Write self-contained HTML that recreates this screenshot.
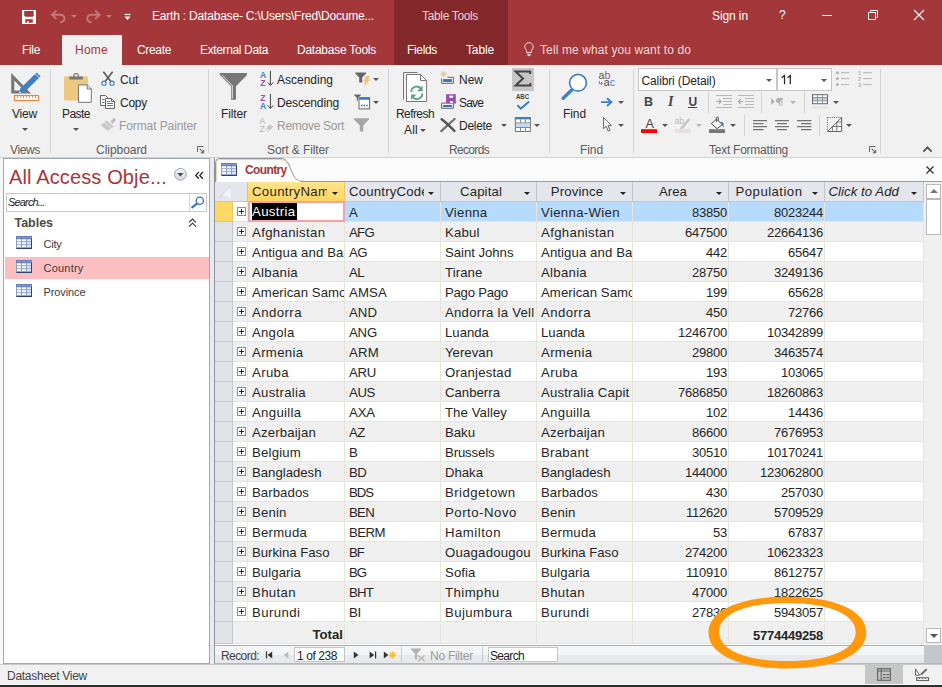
<!DOCTYPE html>
<html><head><meta charset="utf-8"><title>Access</title>
<style>
*{box-sizing:border-box;margin:0;padding:0}
html,body{width:942px;height:687px;overflow:hidden;background:#f1f1f1}
body{font-family:"Liberation Sans",sans-serif;font-size:12px;color:#262626;position:relative}
.abs,#app *{position:absolute}
#app{position:absolute;left:0;top:0;width:942px;height:687px;overflow:hidden}
#app svg{overflow:visible}
/* title */
#title{left:0;top:0;width:942px;height:65px;background:#a4373a}
#tt{left:394px;top:0;width:114px;height:65px;background:#83292c}
.w{color:#fff;white-space:nowrap}
.t12{font-size:12px;line-height:14px;white-space:nowrap}
#hometab{left:62px;top:35px;width:60px;height:30px;background:#f1f1f1}
/* ribbon */
#ribbon{left:0;top:65px;width:942px;height:92px;background:#f1f1f1}
#ribline{left:0;top:157px;width:942px;height:1px;background:#d2d2d2}
.sep{width:1px;background:#d4d4d4;top:70px;height:83px}
.lbl{font-size:12px;color:#262626;white-space:nowrap;line-height:14px}
.dis{color:#9a9a9a}
.grp{font-size:12px;color:#5c5c5c;white-space:nowrap;line-height:14px;top:142px}
.dd{width:0;height:0;border-left:3px solid transparent;border-right:3px solid transparent;border-top:3px solid #555}
.dd.g{border-top-color:#b4b4b4}
/* nav */
#navwrap{left:0;top:158px;width:214px;height:506px;background:linear-gradient(90deg,#f7f7f7 0,#f7f7f7 209px,#e9ebee 209px)}
#nav{left:3px;top:158px;width:207px;height:506px;background:#fff;border:1px solid #a1a8b2}
#navsel{left:5px;top:257px;width:204px;height:22px;background:#fbbfc1}
/* doc */
#doc{left:214px;top:158px;width:728px;height:506px;background:#f0f0f0}
#grid{left:215px;top:182px;width:709px;height:463px;background:#fff;overflow:hidden}
.r{left:0;width:708px;height:20px;font-size:13.2px;line-height:21px;white-space:nowrap}
#grid .r{left:0}
.r .rs{left:0;top:0;width:18px;height:20px;background:#e1e3e8;border-right:1px solid #c6c8cf;border-bottom:1px solid #c6c8cf}
.r .ex{left:18px;top:0;width:15px;height:20px;border-bottom:1px solid #e6e2d3;border-right:1px solid #ece9de}
.r .ex b{left:4px;top:5px;width:9px;height:9px;border:1px solid #8d8d8d;background:#fff}
.r .ex b:before{content:"";position:absolute;left:1px;top:3px;width:5px;height:1px;background:#222}
.r .ex b:after{content:"";position:absolute;left:3px;top:1px;width:1px;height:5px;background:#222}
.c{top:0;height:20px;overflow:hidden;padding-left:4px;border-right:1px solid #e8e5d7;border-bottom:1px solid #e8e5d7;color:#262626;letter-spacing:0}
.c1{left:33px;width:97px}.c2{left:130px;width:96px}.c3{left:226px;width:96px}.c4{left:322px;width:96px}.c5{left:418px;width:96px}.c6{left:514px;width:96px}.c7{left:610px;width:99px}
.n{text-align:right;padding-right:1px;padding-left:0;font-size:13px;letter-spacing:-.22px;line-height:22px}
.alt .c,.alt .ex,.tot .c{background:#f0f0f0}
.sel .c,.sel .ex{background:#b7dbff}
.sel .ex{background:#fff}
.sel .rs{background:#ffd966;border-color:#e8c75a}
.c.edit{background:#fff;border:2px solid #f3a3a8;line-height:17px;padding-left:2px;top:-1px;height:21px;z-index:3}
.c.edit em{position:static;font-style:normal;background:#000;color:#fff;display:inline-block;height:17px;line-height:18px;padding:0 1px 0 0}
/* header */
.h{top:0;height:20px;background:#e4e6eb;border-right:1px solid #c3c5cc;border-bottom:1px solid #c3c5cc;font-size:13.2px;line-height:19px;white-space:nowrap;overflow:hidden;color:#262626}
.h .dd{border-top-color:#222;top:9.5px;border-left-width:3.5px;border-right-width:3.5px;border-top-width:3.5px}
/* status */
#status{left:0;top:664px;width:942px;height:20px;background:#f1f1f1;border-top:1px solid #c9c9c9}
#blackbar{left:0;top:684px;width:942px;height:3px;background:#2e2e2e;border-top:1px solid #fafafa}
</style></head><body><div id="app">
<div id="title"></div><div id="tt"></div><div id="hometab"></div>
<span class="" style="left:152px;top:8px;font-size:12px;line-height:16px;white-space:nowrap;letter-spacing:-0.197px;color:#fff;">Earth : Database- C:\Users\Fred\Docume...</span>
<span class="" style="left:422px;top:8px;font-size:12px;line-height:16px;white-space:nowrap;letter-spacing:-0.347px;color:#e9cfd0;">Table Tools</span>
<span class="" style="left:712px;top:8px;font-size:12px;line-height:16px;white-space:nowrap;letter-spacing:-0.099px;color:#fff;">Sign in</span>
<span class="" style="left:779px;top:7px;font-size:12px;line-height:16px;white-space:nowrap;color:#fff;">?</span>
<span class="" style="left:22px;top:42px;font-size:12px;line-height:16px;white-space:nowrap;letter-spacing:-0.334px;color:#fff;">File</span>
<span class="" style="left:75px;top:42px;font-size:12px;line-height:16px;white-space:nowrap;letter-spacing:0.248px;color:#a4373a;">Home</span>
<span class="" style="left:137px;top:42px;font-size:12px;line-height:16px;white-space:nowrap;letter-spacing:-0.336px;color:#fff;">Create</span>
<span class="" style="left:200px;top:42px;font-size:12px;line-height:16px;white-space:nowrap;letter-spacing:-0.362px;color:#fff;">External Data</span>
<span class="" style="left:297px;top:42px;font-size:12px;line-height:16px;white-space:nowrap;letter-spacing:-0.250px;color:#fff;">Database Tools</span>
<span class="" style="left:407px;top:42px;font-size:12px;line-height:16px;white-space:nowrap;letter-spacing:-0.335px;color:#fff;">Fields</span>
<span class="" style="left:466px;top:42px;font-size:12px;line-height:16px;white-space:nowrap;letter-spacing:-0.137px;color:#fff;">Table</span>
<span class="" style="left:540px;top:42px;font-size:12px;line-height:16px;white-space:nowrap;letter-spacing:0.108px;color:#f0d9da;">Tell me what you want to do</span>
<div id="ribbon"></div><div id="ribline"></div>
<i class="sep" style="left:50px;top:69px;height:84px"></i>
<i class="sep" style="left:208px;top:69px;height:84px"></i>
<i class="sep" style="left:388px;top:69px;height:84px"></i>
<i class="sep" style="left:549px;top:69px;height:84px"></i>
<i class="sep" style="left:633px;top:69px;height:84px"></i>
<i class="sep" style="left:880px;top:69px;height:84px"></i>
<span class="lbl" style="left:12px;top:106px;font-size:12px;line-height:16px;white-space:nowrap;letter-spacing:-0.198px;">View</span>
<i class="dd " style="left:22px;top:128px"></i>
<span class="grp" style="left:10px;top:142px;font-size:12px;line-height:16px;white-space:nowrap;letter-spacing:-0.358px;">Views</span>
<span class="lbl" style="left:62px;top:106px;font-size:12px;line-height:16px;white-space:nowrap;letter-spacing:-0.537px;">Paste</span>
<i class="dd " style="left:73px;top:128px"></i>
<span class="lbl" style="left:120px;top:72px;font-size:12px;line-height:16px;white-space:nowrap;letter-spacing:-0.224px;">Cut</span>
<span class="lbl" style="left:120px;top:95px;font-size:12px;line-height:16px;white-space:nowrap;letter-spacing:-0.253px;">Copy</span>
<span class="lbl dis" style="left:119px;top:118px;font-size:12px;line-height:16px;white-space:nowrap;letter-spacing:-0.097px;">Format Painter</span>
<span class="grp" style="left:96px;top:142px;font-size:12px;line-height:16px;white-space:nowrap;letter-spacing:-0.040px;">Clipboard</span>
<span class="lbl" style="left:221px;top:106px;font-size:12px;line-height:16px;white-space:nowrap;letter-spacing:-0.111px;">Filter</span>
<span class="lbl" style="left:277px;top:72px;font-size:12px;line-height:16px;white-space:nowrap;letter-spacing:-0.004px;">Ascending</span>
<span class="lbl" style="left:277px;top:95px;font-size:12px;line-height:16px;white-space:nowrap;letter-spacing:-0.137px;">Descending</span>
<span class="lbl dis" style="left:277px;top:118px;font-size:12px;line-height:16px;white-space:nowrap;letter-spacing:-0.275px;">Remove Sort</span>
<span class="grp" style="left:267px;top:142px;font-size:12px;line-height:16px;white-space:nowrap;letter-spacing:-0.104px;">Sort &amp; Filter</span>
<i class="dd " style="left:373px;top:78px"></i>
<i class="dd " style="left:373px;top:101px"></i>
<span class="lbl" style="left:396px;top:106px;font-size:12px;line-height:16px;white-space:nowrap;letter-spacing:-0.574px;">Refresh</span>
<span class="lbl" style="left:404px;top:122px;font-size:12px;line-height:16px;white-space:nowrap;letter-spacing:0.221px;">All</span>
<i class="dd " style="left:420px;top:129px"></i>
<span class="lbl" style="left:459px;top:72px;font-size:12px;line-height:16px;white-space:nowrap;letter-spacing:-0.002px;">New</span>
<span class="lbl" style="left:459px;top:95px;font-size:12px;line-height:16px;white-space:nowrap;letter-spacing:-0.838px;">Save</span>
<span class="lbl" style="left:459px;top:118px;font-size:12px;line-height:16px;white-space:nowrap;letter-spacing:-0.281px;">Delete</span>
<i class="dd " style="left:501px;top:124px"></i>
<span class="grp" style="left:449px;top:142px;font-size:12px;line-height:16px;white-space:nowrap;letter-spacing:-0.669px;">Records</span>
<i class="dd " style="left:534px;top:124px"></i>
<span class="lbl" style="left:563px;top:106px;font-size:12px;line-height:16px;white-space:nowrap;letter-spacing:-0.086px;">Find</span>
<span class="grp" style="left:580px;top:142px;font-size:12px;line-height:16px;white-space:nowrap;letter-spacing:-0.086px;">Find</span>
<i class="dd " style="left:618px;top:101px"></i>
<i class="dd " style="left:618px;top:124px"></i>
<div style="left:638px;top:68px;width:139px;height:23px;background:#fff;border:1px solid #c6c6c6"></div>
<div style="left:777px;top:68px;width:55px;height:23px;background:#fff;border:1px solid #c6c6c6"></div>
<span class="lbl" style="left:641.5px;top:73px;font-size:12px;line-height:16px;white-space:nowrap;letter-spacing:-0.126px;">Calibri (Detail)</span>
<i class="dd " style="left:766px;top:79px"></i>
<svg style="left:780px;top:74px" width="13" height="12" viewBox="780 74 13 12"><path d="M781.6 77.8L784.5 75.6V84.2M787.4 77.8L790.3 75.6V84.2" fill="none" stroke="#262626" stroke-width="1.25"/></svg>
<i class="dd " style="left:821px;top:79px"></i>
<span class="lbl" style="left:644px;top:94px;font-size:12.5px;line-height:16.5px;white-space:nowrap;letter-spacing:-1.027px;color:#444;font-weight:bold;">B</span>
<span class="lbl" style="left:668px;top:94px;font-size:12px;line-height:16px;white-space:nowrap;color:#444;font-weight:bold;font-style:italic;font-family:'Liberation Serif',serif;font-size:14px;">I</span>
<span class="lbl" style="left:688.5px;top:94px;font-size:12px;line-height:16px;white-space:nowrap;letter-spacing:-0.166px;color:#444;font-weight:bold;">U</span>
<i style="left:688px;top:107px;width:9px;height:1px;background:#444"></i>
<i class="sep" style="left:708px;top:92px;height:21px"></i>
<i class="sep" style="left:761px;top:92px;height:21px"></i>
<i class="sep" style="left:804px;top:92px;height:21px"></i>
<i class="sep" style="left:744px;top:115px;height:21px"></i>
<i class="sep" style="left:819px;top:115px;height:21px"></i>
<i class="dd g" style="left:790px;top:101px"></i>
<i class="dd " style="left:833px;top:101px"></i>
<i class="dd " style="left:662px;top:124px"></i>
<i class="dd g" style="left:696px;top:124px"></i>
<i class="dd " style="left:730px;top:124px"></i>
<i class="dd " style="left:846px;top:124px"></i>
<span class="grp" style="left:709px;top:142px;font-size:12px;line-height:16px;white-space:nowrap;letter-spacing:-0.246px;">Text Formatting</span>
<!-- QAT -->
<svg style="left:22px;top:10px" width="14" height="14" viewBox="22 10 14 14"><rect x="22" y="10" width="14" height="14" rx="0.6" fill="#fff"/><path d="M24.2 11.1H33.7V15.4L32.7 16.7H25.2L24.2 15.4Z" fill="#a4373a"/><rect x="25.2" y="19.2" width="7.6" height="3.5" fill="#a4373a"/><rect x="27" y="21.1" width="1.7" height="1.6" fill="#fff"/></svg>
<svg style="left:50px;top:9px" width="17" height="15" viewBox="50 9 17 15"><path d="M56.4 10.6L52 14.8L56.4 19M52.4 14.8H59.6Q64.4 14.8 64.4 18.6Q64.4 22 60 22.2" fill="none" stroke="#c7767a" stroke-width="1.9"/></svg>
<i class="dd" style="left:71px;top:15px;border-top-color:#c7767a"></i>
<svg style="left:85px;top:9px" width="17" height="15" viewBox="85 9 17 15"><path d="M95.2 10.6L99.6 14.8L95.2 19M99.2 14.8H92Q87.2 14.8 87.2 18.6Q87.2 22 91.6 22.2" fill="none" stroke="#c7767a" stroke-width="1.9"/></svg>
<i class="dd" style="left:106px;top:15px;border-top-color:#c9787b"></i>
<svg style="left:124px;top:13px" width="8" height="8" viewBox="124 13 8 8"><path d="M124.6 14.5H130.4" stroke="#fff" stroke-width="1.2"/><path d="M124.4 16.6H130.6L127.5 20Z" fill="#fff"/></svg>
<!-- window buttons -->
<svg style="left:822px;top:10px" width="10" height="11" viewBox="0 0 10 11"><path d="M0 5.5H10" stroke="#fff" stroke-width="1"/></svg>
<svg style="left:868px;top:10px" width="10" height="10" viewBox="0 0 10 10"><path d="M0.5 2.5H7.5V9.5H0.5Z M2.5 2.5V0.5H9.5V7.5H7.5" fill="none" stroke="#fff" stroke-width="1"/></svg>
<svg style="left:914px;top:10px" width="10" height="10" viewBox="0 0 10 10"><path d="M0 0L10 10M10 0L0 10" stroke="#fff" stroke-width="1.1"/></svg>
<!-- bulb -->
<svg style="left:524px;top:42px" width="10" height="14" viewBox="0 0 10 14"><path d="M5 0.6A4.2 4.2 0 0 1 7.5 8.2V10.5H2.5V8.2A4.2 4.2 0 0 1 5 0.6Z" fill="none" stroke="#f0d9da" stroke-width="1"/><path d="M3 12.3H7M3.6 13.6H6.4" stroke="#f0d9da" stroke-width="1"/></svg>
<!-- View icon -->
<svg style="left:10px;top:70px" width="32" height="32" viewBox="10 70 32 32"><path d="M11.2 73L31.2 93.4H11.2Z M14.3 80.6V90.4H24Z" fill="#777" fill-rule="evenodd"/><path d="M19 93.6L20.3 88.6L36.6 72.4L40.6 76.3L24.2 92.4Z" fill="#3f7fc3"/><path d="M35.2 73.8L39.2 77.7" stroke="#f1f1f1" stroke-width="0.9"/><path d="M19.6 91.3L21.4 93L19 93.6Z" fill="#f1f1f1"/><rect x="14.5" y="95.5" width="24" height="5" fill="#fff" stroke="#e8873a" stroke-width="1.1"/><path d="M17.5 95.5V98M20.5 95.5V97.4M23.5 95.5V98M26.5 95.5V97.4M29.5 95.5V98M32.5 95.5V97.4M35.5 95.5V98" stroke="#e8873a" stroke-width="1"/></svg>
<!-- Paste icon -->
<svg style="left:62px;top:70px" width="32" height="34" viewBox="62 70 32 34"><rect x="64" y="76.2" width="24" height="24.4" rx="1.6" fill="#edc87e"/><path d="M69.4 79.6V76.4H73.4V74.6Q73.4 73 76.1 73Q78.8 73 78.8 74.6V76.4H82.8V79.6Z" fill="#777"/><rect x="74.6" y="74.4" width="3" height="2" fill="#f1f1f1"/><path d="M78.5 84.9H87.2L91.3 89V102.3H78.5Z" fill="#fff" stroke="#777" stroke-width="1"/><path d="M87.2 84.9V89H91.3" fill="none" stroke="#777" stroke-width="1"/></svg>
<!-- Cut -->
<svg style="left:100px;top:70px" width="17" height="17" viewBox="100 70 17 17"><path d="M103.4 71.8L111.2 82M112.6 71.8L104.8 82" stroke="#555" stroke-width="1.5" fill="none"/><circle cx="104" cy="83.2" r="2.1" fill="none" stroke="#3f7fc3" stroke-width="1.1"/><circle cx="112" cy="83.2" r="2.1" fill="none" stroke="#3f7fc3" stroke-width="1.1"/></svg>
<!-- Copy -->
<svg style="left:99px;top:94px" width="18" height="16" viewBox="99 94 18 16"><path d="M100.5 95.5H105.5L108 98V105.5H100.5Z" fill="#fff" stroke="#666" stroke-width="1"/><path d="M102 99.5H104.5M102 102.5H104.5" stroke="#3f7fc3" stroke-width="1"/><path d="M105.5 98.5H111.5L114.5 101.5V108.5H105.5Z" fill="#fff" stroke="#666" stroke-width="1"/><path d="M111.5 98.5V101.5H114.5" fill="none" stroke="#666" stroke-width="1"/><path d="M107 103.5H113M107 105.5H113M107 101.5H110" stroke="#3f7fc3" stroke-width="1"/></svg>
<!-- Format painter (disabled) -->
<svg style="left:100px;top:117px" width="17" height="15" viewBox="100 117 17 15"><path d="M110.5 121.8L113.8 117.8L116 119.8L112.6 123.8Z" fill="#bdbdbd"/><path d="M106.2 120.2L113.8 126.6L111.8 128.2L104.6 122Z" fill="#c8c8c8"/><path d="M104.4 122.4L111.2 128.4L107.6 131L100.8 125Z" fill="#cfc6cb"/></svg>
<!-- dialog launchers -->
<!-- Filter funnel -->
<svg style="left:219px;top:72px" width="29" height="29" viewBox="219 72 29 29"><path d="M219.9 73H247V75L236 86.2V99.8H231.1V86.2L219.9 75Z" fill="#777"/><path d="M222 75.2L232.3 85.7V98.6" fill="none" stroke="#f1f1f1" stroke-width="0.9"/></svg>
<!-- AZ asc -->
<svg style="left:258px;top:70px" width="17" height="17" viewBox="258 70 17 17" font-family="Liberation Sans" font-weight="bold" font-size="8.6"><text x="260" y="77.6" fill="#3f7fc3">A</text><text x="260.2" y="85.8" fill="#9b4fb0">Z</text><path d="M270.4 71V85.2M267.6 82.4L270.4 85.4L273.2 82.4" fill="none" stroke="#444" stroke-width="1"/></svg>
<!-- ZA desc -->
<svg style="left:258px;top:93px" width="17" height="17" viewBox="258 93 17 17" font-family="Liberation Sans" font-weight="bold" font-size="8.6"><text x="260.2" y="100.7" fill="#9b4fb0">Z</text><text x="260" y="108.8" fill="#3f7fc3">A</text><path d="M270.4 94V108.2M267.6 105.4L270.4 108.4L273.2 105.4" fill="none" stroke="#444" stroke-width="1"/></svg>
<!-- Remove sort -->
<svg style="left:258px;top:116px" width="17" height="17" viewBox="258 116 17 17" font-family="Liberation Sans" font-size="8.6"><text x="259.4" y="123.6" fill="#b5b5b5">A</text><text x="259.6" y="131.7" fill="#b5b5b5">Z</text><path d="M265 129.4L270 124.2L273.2 126.8L268.2 132Z" fill="#c6c6c6"/><path d="M265 129.4L266.6 127.8L269.8 130.4L268.2 132Z" fill="#e3e3e3"/></svg>
<!-- Selection filter -->
<svg style="left:354px;top:71px" width="18" height="17" viewBox="354 71 18 17"><path d="M355.3 72.4H366.1V73.6L362.2 77.6V82.6H359.2V77.6L355.3 73.6Z" fill="#666"/><path d="M366.6 76H370.4L368.2 79.6H370.4L363.4 86.8L365.6 81.4H363.2Z" fill="#f2c274"/></svg>
<!-- Advanced filter -->
<svg style="left:353px;top:94px" width="18" height="17" viewBox="353 94 18 17"><rect x="359" y="97.7" width="10.6" height="11.2" fill="#fff" stroke="#666" stroke-width="1"/><rect x="359" y="97.2" width="10.6" height="2.6" fill="#3f7fc3"/><path d="M361 105.5H362.4M363.6 105.5H365M366.2 105.5H367.6" stroke="#555" stroke-width="1.4"/><path d="M354 94.3H361V95.3L358.6 97.8V101H356.6V97.8L354 95.3Z" fill="#666" stroke="#f1f1f1" stroke-width="0.5"/></svg>
<!-- Toggle filter disabled -->
<svg style="left:353px;top:117px" width="18" height="16" viewBox="353 117 18 16"><path d="M354 118.2H369V119.6L363.2 125.4V131.6H359.8V125.4L354 119.6Z" fill="#a6a6a6"/></svg>
<!-- Refresh All -->
<svg style="left:402px;top:71px" width="27" height="32" viewBox="402 71 27 32"><path d="M403.5 99.5V72.5H417.5" fill="none" stroke="#777" stroke-width="1"/><path d="M406.5 74.5H420.6L426.6 80.5V101.5H406.5Z" fill="#fff" stroke="#777" stroke-width="1"/><path d="M420.6 74.5V80.5H426.6" fill="none" stroke="#777" stroke-width="1"/><path d="M411.3 92A5.4 5.4 0 0 1 420.8 88.4" fill="none" stroke="#5aa68a" stroke-width="1.9"/><path d="M422.6 85.6V91.2H417Z" fill="#5aa68a"/><path d="M422.3 93.6A5.4 5.4 0 0 1 412.8 97.2" fill="none" stroke="#5aa68a" stroke-width="1.9"/><path d="M411 100V94.4H416.6Z" fill="#5aa68a"/></svg>
<!-- New -->
<svg style="left:439px;top:70px" width="17" height="15" viewBox="439 70 17 15"><path d="M443.5 70.8V77.4M440.2 74.1H446.8M441.2 71.8L445.8 76.4M445.8 71.8L441.2 76.4" stroke="#f3b768" stroke-width="0.8"/><path d="M447.5 77.3H453.4V83.3H441.6V78.4" fill="none" stroke="#666" stroke-width="1"/><rect x="443.1" y="79.1" width="8.9" height="2.8" fill="#3f6fb0"/></svg>
<!-- Save -->
<svg style="left:440px;top:93px" width="17" height="17" viewBox="440 93 17 17"><path d="M446 103.1H441.6V108.3H453.4V104" fill="none" stroke="#666" stroke-width="1"/><rect x="443.1" y="105" width="8.9" height="2" fill="#3f6fb0"/><rect x="446.1" y="94.2" width="9.7" height="9.5" fill="#9a4db0"/><rect x="449.3" y="95.6" width="3.8" height="2.2" fill="#f4f4f4"/><rect x="449.9" y="101" width="3.1" height="2.1" fill="#f4f4f4"/></svg>
<!-- Delete -->
<svg style="left:440px;top:117px" width="16" height="16" viewBox="440 117 16 16"><path d="M454.6 119L441.3 131.2" stroke="#727272" stroke-width="2.3" stroke-linecap="round"/><path d="M441.6 119.2Q447 123 454.4 131" fill="none" stroke="#505050" stroke-width="2.4" stroke-linecap="round"/></svg>
<!-- Totals sigma -->
<div style="left:512px;top:68px;width:22px;height:23px;background:#c6c6c6"></div>
<svg style="left:514px;top:70px" width="18" height="17" viewBox="514 70 18 17"><path d="M530.2 74V71.6H515.6L523 78.6L515.6 85.6H530.4V83" fill="none" stroke="#444" stroke-width="2" stroke-linejoin="miter"/></svg>
<!-- Spelling -->
<svg style="left:515px;top:93px" width="16" height="18" viewBox="515 93 16 18" font-family="Liberation Sans" font-weight="bold" font-size="6.3"><text x="515.9" y="99" fill="#444" textLength="13.2" lengthAdjust="spacingAndGlyphs">ABC</text><path d="M517.4 105.2L520.8 108.6L529.2 101.4" fill="none" stroke="#3f7fc3" stroke-width="2"/></svg>
<!-- More -->
<svg style="left:514px;top:116px" width="18" height="17" viewBox="514 116 18 17"><rect x="515.4" y="117.5" width="15" height="14" fill="#fff" stroke="#777" stroke-width="1"/><rect x="514.9" y="117" width="16" height="2.4" fill="#3f7fc3"/><rect x="516" y="123.4" width="14" height="3.6" fill="#c5daf2"/><path d="M515.4 122.9H530.4M515.4 127.5H530.4M520.5 119.4V122.9M525.5 119.4V122.9M520.5 127.5V131.5M525.5 127.5V131.5" stroke="#8a8a8a" stroke-width="1"/></svg>
<!-- Find -->
<svg style="left:560px;top:72px" width="30" height="30" viewBox="560 72 30 30"><circle cx="578" cy="82.8" r="8.4" fill="#fff" stroke="#3f7fc3" stroke-width="1.7"/><path d="M571.4 90.2L563.2 98.2" stroke="#3f7fc3" stroke-width="3.4" stroke-linecap="round"/></svg>
<!-- Replace -->
<svg style="left:597px;top:70px" width="20" height="18" viewBox="597 70 20 18" font-family="Liberation Sans" font-size="10.6"><text x="598.6" y="79.4" fill="#555">a</text><text x="604.6" y="79.4" fill="#9b4fb0">b</text><text x="603.8" y="86.1" fill="#444">a</text><text x="609.8" y="86.1" fill="#3f7fc3">c</text><path d="M599.4 81V83.6H602.4M601 82L602.6 83.6L601 85.2" fill="none" stroke="#3f7fc3" stroke-width="0.9"/></svg>
<!-- Go to -->
<svg style="left:600px;top:97px" width="14" height="11" viewBox="600 97 14 11"><path d="M601 102.1H611M607 98.2L611.4 102.1L607 106" fill="none" stroke="#3f7fc3" stroke-width="1.9"/></svg>
<!-- Select -->
<svg style="left:602px;top:116px" width="11" height="16" viewBox="602 116 11 16"><path d="M603.6 117.6V128.6L606.2 126.2L608.2 131L610 130.2L608 125.6H611.4Z" fill="#fff" stroke="#555" stroke-width="0.9"/></svg>
<!-- bullets / numbering (disabled) -->
<svg style="left:835px;top:70px" width="38" height="17" viewBox="835 70 38 17" font-family="Liberation Sans" font-size="5.5" font-weight="bold"><g fill="#b4b4b4"><circle cx="837.4" cy="72.7" r="1.5"/><circle cx="837.4" cy="78.6" r="1.5"/><circle cx="837.4" cy="84.6" r="1.5"/></g><path d="M841 72.7H849.2M841 78.6H849.2M841 84.6H849.2M863.3 72.7H871.8M863.3 78.6H871.8M863.3 84.6H871.8" stroke="#b4b4b4" stroke-width="1"/><text x="858" y="74.6" fill="#b4b4b4">1</text><text x="858" y="80.6" fill="#b4b4b4">2</text><text x="858" y="86.6" fill="#b4b4b4">3</text></svg>
<!-- indent (disabled) -->
<svg style="left:715px;top:94px" width="41" height="15" viewBox="715 94 41 15"><path d="M716 95.5H732M723 98.5H732M723 101.5H732M723 104.5H732M716 107.5H732M738 95.5H754M745 98.5H754M745 101.5H754M745 104.5H754M738 107.5H754" stroke="#b9b9b9" stroke-width="1"/><path d="M716 101.5H721M718.8 99.2L721.2 101.5L718.8 103.8M738.4 101.5H743.4M740.8 99.2L738.4 101.5L740.8 103.8" fill="none" stroke="#a8a8a8" stroke-width="1.1"/></svg>
<!-- paragraph direction (disabled) -->
<svg style="left:770px;top:96px" width="15" height="12" viewBox="770 96 15 12"><path d="M771.2 98.2L774.8 101.6L771.2 105Z" fill="#b0b0b0"/><path d="M779.4 105.8V98.4M781.8 105.8V98.4M783 98.4H778.6A2.2 2.2 0 0 0 778.6 102.8H779.4" fill="#b0b0b0" stroke="#b0b0b0" stroke-width="1"/></svg>
<!-- gridlines -->
<svg style="left:811px;top:93px" width="19" height="17" viewBox="811 93 19 17"><rect x="812.5" y="94.7" width="15" height="9" fill="#fff" stroke="#666" stroke-width="1"/><rect x="813" y="97.8" width="14" height="2.8" fill="#b9d0ee"/><path d="M812.5 97.5H827.5M812.5 100.9H827.5M817.5 94.7V103.7M822.5 94.7V103.7" stroke="#8a8a8a" stroke-width="0.9"/><rect x="812" y="106" width="16" height="3" fill="#e6e6e6"/></svg>
<!-- font color -->
<svg style="left:640px;top:116px" width="18" height="18" viewBox="640 116 18 18"><text x="649.6" y="128.4" text-anchor="middle" font-family="Liberation Sans" font-size="12.6" fill="#444">A</text><rect x="641" y="129.2" width="16" height="3.8" fill="#ff0000"/></svg>
<!-- highlight (disabled) -->
<svg style="left:674px;top:116px" width="18" height="18" viewBox="674 116 18 18" font-family="Liberation Sans" font-size="8.6"><text x="674.4" y="124.2" fill="#bcbcbc">ab</text><path d="M680.2 128L688.4 118.2L690.2 119.8L682.4 129.2L679.6 129.8Z" fill="#c4c4c4"/><rect x="675" y="129.2" width="15.8" height="3.8" fill="#e6dfe6"/></svg>
<!-- fill bucket -->
<svg style="left:708px;top:116px" width="18" height="18" viewBox="708 116 18 18"><path d="M716.4 119.2L722.4 124.6L717 128.6L711.4 123.6Z" fill="#fff" stroke="#444" stroke-width="1"/><path d="M716.4 122.4V117.8Q716.4 117 717.4 117Q718.4 117 718.4 117.8V120.6" fill="none" stroke="#444" stroke-width="0.9"/><path d="M721.4 121.6Q724.6 122.6 723.6 127.6Q722.6 124.6 720.6 123.4Z" fill="#3f7fc3"/><rect x="709" y="129.2" width="16" height="3.8" fill="#777"/></svg>
<!-- align -->
<svg style="left:752px;top:119px" width="61" height="12" viewBox="752 119 61 12"><path d="M753 120.7H767M753 123.7H763.5M753 126.7H767M753 129.7H763.5 M775 120.7H789M777 123.7H787M775 126.7H789M777 129.7H787 M797 120.7H811.4M801 123.7H811.4M797 126.7H811.4M801 129.7H811.4" stroke="#555" stroke-width="1"/></svg>
<!-- alt row color -->
<svg style="left:826px;top:116px" width="17" height="17" viewBox="826 116 17 17"><path d="M827.4 117.5H842M827.4 117.5V131.5" stroke="#555" stroke-width="1" stroke-dasharray="1 1.2"/><path d="M827.4 131.5H841.6V117.6Z" fill="#fff" stroke="#666" stroke-width="1"/><path d="M832.4 126.5H841.6M836.8 122V131.5M832.4 126.5V131.5M836.8 122H841.6" stroke="#666" stroke-width="0.9" fill="none"/></svg>
<svg style="left:197px;top:146px" width="8" height="8" viewBox="0 0 8 8"><path d="M0.5 6V0.5H6.5" fill="none" stroke="#666" stroke-width="1"/><path d="M2.6 2.6L5.6 5.6" stroke="#666" stroke-width="1.1"/><path d="M7.2 3.4V7.2H3.4Z" fill="#666"/></svg>
<svg style="left:869px;top:146px" width="8" height="8" viewBox="0 0 8 8"><path d="M0.5 6V0.5H6.5" fill="none" stroke="#666" stroke-width="1"/><path d="M2.6 2.6L5.6 5.6" stroke="#666" stroke-width="1.1"/><path d="M7.2 3.4V7.2H3.4Z" fill="#666"/></svg>
<svg style="left:922px;top:145px" width="11" height="8" viewBox="0 0 11 8"><path d="M1.4 6.6L5.5 2.4L9.6 6.6" fill="none" stroke="#555" stroke-width="1.9"/></svg>
<div id="navwrap"></div><div id="nav"></div>
<span class="" style="left:9px;top:165px;font-size:20px;line-height:24px;white-space:nowrap;letter-spacing:0.132px;color:#a4373a;">All Access Obje...</span>
<div style="left:6px;top:193px;width:201px;height:19px;background:#fff;border:1px solid #c8c8c8"></div><i style="left:189px;top:194px;width:1px;height:17px;background:#d4d4d4"></i>
<span class="" style="left:8px;top:195px;font-size:11px;line-height:15px;white-space:nowrap;letter-spacing:-0.836px;color:#222;font-style:italic;">Search...</span>
<span class="" style="left:14.5px;top:215px;font-size:12.5px;line-height:16.5px;white-space:nowrap;letter-spacing:-0.029px;color:#54493f;font-weight:bold;">Tables</span>
<div id="navsel"></div>
<span class="" style="left:43.5px;top:237px;font-size:11px;line-height:15px;white-space:nowrap;letter-spacing:-0.236px;color:#3c3c3c;">City</span>
<span class="" style="left:43.5px;top:261px;font-size:11px;line-height:15px;white-space:nowrap;letter-spacing:0.212px;color:#3c3c3c;">Country</span>
<span class="" style="left:43.5px;top:285px;font-size:11px;line-height:15px;white-space:nowrap;letter-spacing:-0.099px;color:#3c3c3c;">Province</span>
<svg style="left:16px;top:236px" width="16" height="13" viewBox="0 0 16 13"><rect x="0" y="0" width="16" height="13" fill="#8e9fc6"/><rect x="0" y="0" width="16" height="3" fill="#6a80b4"/><path d="M1 1.5H5M6 1.5H10M11 1.5H15" stroke="#93a5cf" stroke-width="0.8"/><rect x="1" y="3.3" width="4" height="2" fill="#ffffff"/><rect x="6" y="3.3" width="4" height="2" fill="#f0f4fc"/><rect x="11" y="3.3" width="4" height="2" fill="#dfe8fa"/><rect x="1" y="6.2" width="4" height="2" fill="#ffffff"/><rect x="6" y="6.2" width="4" height="2" fill="#f0f4fc"/><rect x="11" y="6.2" width="4" height="2" fill="#dfe8fa"/><rect x="1" y="9.1" width="4" height="2" fill="#ffffff"/><rect x="6" y="9.1" width="4" height="2" fill="#f0f4fc"/><rect x="11" y="9.1" width="4" height="2" fill="#dfe8fa"/><path d="M15.5 3V13" stroke="#2f4470" stroke-width="1"/><path d="M0.4 12.5H16" stroke="#2f4470" stroke-width="1"/></svg>
<svg style="left:16px;top:260px" width="16" height="13" viewBox="0 0 16 13"><rect x="0" y="0" width="16" height="13" fill="#8e9fc6"/><rect x="0" y="0" width="16" height="3" fill="#6a80b4"/><path d="M1 1.5H5M6 1.5H10M11 1.5H15" stroke="#93a5cf" stroke-width="0.8"/><rect x="1" y="3.3" width="4" height="2" fill="#ffffff"/><rect x="6" y="3.3" width="4" height="2" fill="#f0f4fc"/><rect x="11" y="3.3" width="4" height="2" fill="#dfe8fa"/><rect x="1" y="6.2" width="4" height="2" fill="#ffffff"/><rect x="6" y="6.2" width="4" height="2" fill="#f0f4fc"/><rect x="11" y="6.2" width="4" height="2" fill="#dfe8fa"/><rect x="1" y="9.1" width="4" height="2" fill="#ffffff"/><rect x="6" y="9.1" width="4" height="2" fill="#f0f4fc"/><rect x="11" y="9.1" width="4" height="2" fill="#dfe8fa"/><path d="M15.5 3V13" stroke="#2f4470" stroke-width="1"/><path d="M0.4 12.5H16" stroke="#2f4470" stroke-width="1"/></svg>
<svg style="left:16px;top:284px" width="16" height="13" viewBox="0 0 16 13"><rect x="0" y="0" width="16" height="13" fill="#8e9fc6"/><rect x="0" y="0" width="16" height="3" fill="#6a80b4"/><path d="M1 1.5H5M6 1.5H10M11 1.5H15" stroke="#93a5cf" stroke-width="0.8"/><rect x="1" y="3.3" width="4" height="2" fill="#ffffff"/><rect x="6" y="3.3" width="4" height="2" fill="#f0f4fc"/><rect x="11" y="3.3" width="4" height="2" fill="#dfe8fa"/><rect x="1" y="6.2" width="4" height="2" fill="#ffffff"/><rect x="6" y="6.2" width="4" height="2" fill="#f0f4fc"/><rect x="11" y="6.2" width="4" height="2" fill="#dfe8fa"/><rect x="1" y="9.1" width="4" height="2" fill="#ffffff"/><rect x="6" y="9.1" width="4" height="2" fill="#f0f4fc"/><rect x="11" y="9.1" width="4" height="2" fill="#dfe8fa"/><path d="M15.5 3V13" stroke="#2f4470" stroke-width="1"/><path d="M0.4 12.5H16" stroke="#2f4470" stroke-width="1"/></svg>
<svg style="left:173px;top:167px" width="15" height="15" viewBox="0 0 15 15"><defs><linearGradient id="cg" x1="0" y1="0" x2="0" y2="1"><stop offset="0" stop-color="#f4f5f7"/><stop offset="1" stop-color="#d4d7dd"/></linearGradient></defs><circle cx="7.4" cy="7.3" r="5.9" fill="url(#cg)" stroke="#a3a7ae" stroke-width="1"/><path d="M4.2 6L10.6 6L7.4 9.4Z" fill="#45475a"/></svg>
<svg style="left:195px;top:171px" width="9" height="9" viewBox="0 0 9 9"><path d="M3.8 1L0.8 4.4L3.8 7.8M7.8 1L4.8 4.4L7.8 7.8" fill="none" stroke="#222" stroke-width="1.3"/></svg>
<svg style="left:190px;top:195px" width="16" height="15" viewBox="190 195 16 15"><circle cx="199.8" cy="200.8" r="3.6" fill="#fff" stroke="#3a75b5" stroke-width="1.3"/><path d="M197 203.6L192.2 207.4" stroke="#3a75b5" stroke-width="2.2" stroke-linecap="round"/></svg>
<svg style="left:188px;top:218px" width="9" height="10" viewBox="0 0 9 10"><path d="M1 4.4L4.5 1L8 4.4M1 8.6L4.5 5.2L8 8.6" fill="none" stroke="#333" stroke-width="1.1"/></svg>
<div id="doc"></div>
<div style="left:214px;top:158px;width:728px;height:23px;background:#fbfbfb"></div>
<div style="left:214px;top:181px;width:728px;height:1px;background:#9a9da3"></div>
<div style="left:214px;top:158px;width:1px;height:506px;background:#8f939a"></div>
<svg style="left:215px;top:158px" width="92" height="24" viewBox="215 158 92 24"><path d="M215.5 182V162.5Q215.5 158.5 219.5 158.5H281Q286 158.5 288.6 164L293 174.4Q296 181.4 303 181.4V182Z" fill="#fff" stroke="#8f939a" stroke-width="1"/><path d="M216.6 181V162.8Q216.6 159.6 219.6 159.6H281Q285.2 159.6 287.6 164.4" fill="none" stroke="#e6cfae" stroke-width="1"/><path d="M216 181.5H300" stroke="#fff" stroke-width="1.4"/></svg>
<svg style="left:221px;top:163px" width="16" height="13" viewBox="0 0 16 13"><rect x="0" y="0" width="16" height="13" fill="#8e9fc6"/><rect x="0" y="0" width="16" height="3" fill="#6a80b4"/><path d="M1 1.5H5M6 1.5H10M11 1.5H15" stroke="#93a5cf" stroke-width="0.8"/><rect x="1" y="3.3" width="4" height="2" fill="#ffffff"/><rect x="6" y="3.3" width="4" height="2" fill="#f0f4fc"/><rect x="11" y="3.3" width="4" height="2" fill="#dfe8fa"/><rect x="1" y="6.2" width="4" height="2" fill="#ffffff"/><rect x="6" y="6.2" width="4" height="2" fill="#f0f4fc"/><rect x="11" y="6.2" width="4" height="2" fill="#dfe8fa"/><rect x="1" y="9.1" width="4" height="2" fill="#ffffff"/><rect x="6" y="9.1" width="4" height="2" fill="#f0f4fc"/><rect x="11" y="9.1" width="4" height="2" fill="#dfe8fa"/><path d="M15.5 3V13" stroke="#2f4470" stroke-width="1"/><path d="M0.4 12.5H16" stroke="#2f4470" stroke-width="1"/></svg>
<svg style="left:926px;top:166px" width="8" height="8" viewBox="0 0 8 8"><path d="M0.5 0.5L7.5 7.5M7.5 0.5L0.5 7.5" stroke="#333" stroke-width="1.3"/></svg>
<!-- scrollbar -->
<div style="left:924px;top:182px;width:18px;height:463px;background:#f0f0f0"></div>
<div style="left:926px;top:184px;width:15px;height:15px;background:#fff;border:1px solid #b9b9b9"></div>
<i style="left:930px;top:189px;width:0;height:0;border-left:4px solid transparent;border-right:4px solid transparent;border-bottom:4px solid #777"></i>
<div style="left:926px;top:199px;width:15px;height:36px;background:#fff;border:1px solid #b9b9b9"></div>
<div style="left:926px;top:628px;width:15px;height:15px;background:#fff;border:1px solid #b9b9b9"></div>
<i style="left:930px;top:634px;width:0;height:0;border-left:4px solid transparent;border-right:4px solid transparent;border-top:4px solid #555"></i>
<span class="" style="left:245px;top:162px;font-size:12px;line-height:16px;white-space:nowrap;letter-spacing:-0.628px;color:#a4373a;font-weight:bold;">Country</span>
<div id="grid">
<div class="h" style="left:0;width:33px"><svg style="left:3px;top:4px" width="13" height="12" viewBox="0 0 13 12"><defs><linearGradient id="tg" x1="0" y1="1" x2="1" y2="0"><stop offset="0" stop-color="#cfd9ea"/><stop offset="0.5" stop-color="#f4f6f9"/><stop offset="1" stop-color="#e9ecf1"/></linearGradient></defs><path d="M12.5 0.5V11.5H0.8Z" fill="url(#tg)"/><path d="M0.8 11.5L12.5 0.5" stroke="#c3d3ea" stroke-width="0.8"/></svg></div>
<div class="h" style="left:33px;width:97px;background:linear-gradient(#ffe38f,#ffd65e);border-color:#e9c85e;"><span style="left:0;top:0;width:79px;height:19px;padding-left:4px;overflow:hidden;letter-spacing:0.32px">CountryName</span><i class="dd" style="left:84px"></i></div>
<div class="h" style="left:130px;width:96px;"><span style="left:0;top:0;width:79px;height:19px;padding-left:4px;overflow:hidden;letter-spacing:0.20px">CountryCode</span><i class="dd" style="left:83px"></i></div>
<div class="h" style="left:226px;width:96px;"><span style="left:0;top:0;width:80px;height:19px;text-align:center;letter-spacing:0.13px">Capital</span><i class="dd" style="left:83px"></i></div>
<div class="h" style="left:322px;width:96px;"><span style="left:0;top:0;width:80px;height:19px;text-align:center;letter-spacing:0.14px">Province</span><i class="dd" style="left:83px"></i></div>
<div class="h" style="left:418px;width:96px;"><span style="left:0;top:0;width:80px;height:19px;text-align:center;letter-spacing:0.03px">Area</span><i class="dd" style="left:83px"></i></div>
<div class="h" style="left:514px;width:96px;"><span style="left:0;top:0;width:80px;height:19px;text-align:center;letter-spacing:0.46px">Population</span><i class="dd" style="left:83px"></i></div>
<div class="h" style="left:610px;width:99px"><span style="left:3.5px;top:0;font-style:italic;letter-spacing:0.05px">Click to Add</span><i class="dd" style="left:85.5px"></i></div>
<div class="r sel" style="top:20px"><i class="rs"></i><i class="ex"><b></b></i><span class="c c1 edit"><em style="letter-spacing:0.35px">Austria</em></span><span class="c c2" style="letter-spacing:0.20px">A</span><span class="c c3" style="letter-spacing:0.27px">Vienna</span><span class="c c4" style="letter-spacing:0.33px">Vienna-Wien</span><span class="c c5 n">83850</span><span class="c c6 n">8023244</span><span class="c c7"></span></div>
<div class="r alt" style="top:40px"><i class="rs"></i><i class="ex"><b></b></i><span class="c c1" style="letter-spacing:0.34px">Afghanistan</span><span class="c c2" style="letter-spacing:-0.71px">AFG</span><span class="c c3" style="letter-spacing:0.15px">Kabul</span><span class="c c4" style="letter-spacing:0.34px">Afghanistan</span><span class="c c5 n">647500</span><span class="c c6 n">22664136</span><span class="c c7"></span></div>
<div class="r" style="top:60px"><i class="rs"></i><i class="ex"><b></b></i><span class="c c1" style="letter-spacing:0.09px">Antigua and Ba</span><span class="c c2" style="letter-spacing:-0.54px">AG</span><span class="c c3" style="letter-spacing:-0.04px">Saint Johns</span><span class="c c4" style="letter-spacing:0.09px">Antigua and Ba</span><span class="c c5 n">442</span><span class="c c6 n">65647</span><span class="c c7"></span></div>
<div class="r alt" style="top:80px"><i class="rs"></i><i class="ex"><b></b></i><span class="c c1" style="letter-spacing:0.28px">Albania</span><span class="c c2" style="letter-spacing:-0.57px">AL</span><span class="c c3" style="letter-spacing:0.10px">Tirane</span><span class="c c4" style="letter-spacing:0.28px">Albania</span><span class="c c5 n">28750</span><span class="c c6 n">3249136</span><span class="c c7"></span></div>
<div class="r" style="top:100px"><i class="rs"></i><i class="ex"><b></b></i><span class="c c1" style="letter-spacing:0.05px">American Samo</span><span class="c c2" style="letter-spacing:0.15px">AMSA</span><span class="c c3" style="letter-spacing:-0.26px">Pago Pago</span><span class="c c4" style="letter-spacing:0.05px">American Samo</span><span class="c c5 n">199</span><span class="c c6 n">65628</span><span class="c c7"></span></div>
<div class="r alt" style="top:120px"><i class="rs"></i><i class="ex"><b></b></i><span class="c c1" style="letter-spacing:0.43px">Andorra</span><span class="c c2" style="letter-spacing:0.04px">AND</span><span class="c c3" style="letter-spacing:0.24px">Andorra la Vell</span><span class="c c4" style="letter-spacing:0.43px">Andorra</span><span class="c c5 n">450</span><span class="c c6 n">72766</span><span class="c c7"></span></div>
<div class="r" style="top:140px"><i class="rs"></i><i class="ex"><b></b></i><span class="c c1" style="letter-spacing:0.23px">Angola</span><span class="c c2" style="letter-spacing:-0.20px">ANG</span><span class="c c3" style="letter-spacing:-0.01px">Luanda</span><span class="c c4" style="letter-spacing:-0.01px">Luanda</span><span class="c c5 n">1246700</span><span class="c c6 n">10342899</span><span class="c c7"></span></div>
<div class="r alt" style="top:160px"><i class="rs"></i><i class="ex"><b></b></i><span class="c c1" style="letter-spacing:0.34px">Armenia</span><span class="c c2" style="letter-spacing:0.22px">ARM</span><span class="c c3" style="letter-spacing:0.01px">Yerevan</span><span class="c c4" style="letter-spacing:0.34px">Armenia</span><span class="c c5 n">29800</span><span class="c c6 n">3463574</span><span class="c c7"></span></div>
<div class="r" style="top:180px"><i class="rs"></i><i class="ex"><b></b></i><span class="c c1" style="letter-spacing:0.36px">Aruba</span><span class="c c2" style="letter-spacing:-0.29px">ARU</span><span class="c c3" style="letter-spacing:0.19px">Oranjestad</span><span class="c c4" style="letter-spacing:0.36px">Aruba</span><span class="c c5 n">193</span><span class="c c6 n">103065</span><span class="c c7"></span></div>
<div class="r alt" style="top:200px"><i class="rs"></i><i class="ex"><b></b></i><span class="c c1" style="letter-spacing:0.29px">Australia</span><span class="c c2" style="letter-spacing:-0.38px">AUS</span><span class="c c3" style="letter-spacing:-0.00px">Canberra</span><span class="c c4" style="letter-spacing:0.18px">Australia Capit</span><span class="c c5 n">7686850</span><span class="c c6 n">18260863</span><span class="c c7"></span></div>
<div class="r" style="top:220px"><i class="rs"></i><i class="ex"><b></b></i><span class="c c1" style="letter-spacing:0.32px">Anguilla</span><span class="c c2" style="letter-spacing:-0.14px">AXA</span><span class="c c3" style="letter-spacing:0.06px">The Valley</span><span class="c c4" style="letter-spacing:0.32px">Anguilla</span><span class="c c5 n">102</span><span class="c c6 n">14436</span><span class="c c7"></span></div>
<div class="r alt" style="top:240px"><i class="rs"></i><i class="ex"><b></b></i><span class="c c1" style="letter-spacing:0.16px">Azerbaijan</span><span class="c c2" style="letter-spacing:-0.43px">AZ</span><span class="c c3" style="letter-spacing:-0.02px">Baku</span><span class="c c4" style="letter-spacing:0.16px">Azerbaijan</span><span class="c c5 n">86600</span><span class="c c6 n">7676953</span><span class="c c7"></span></div>
<div class="r" style="top:260px"><i class="rs"></i><i class="ex"><b></b></i><span class="c c1" style="letter-spacing:0.19px">Belgium</span><span class="c c2" style="letter-spacing:-0.80px">B</span><span class="c c3" style="letter-spacing:-0.14px">Brussels</span><span class="c c4" style="letter-spacing:0.25px">Brabant</span><span class="c c5 n">30510</span><span class="c c6 n">10170241</span><span class="c c7"></span></div>
<div class="r alt" style="top:280px"><i class="rs"></i><i class="ex"><b></b></i><span class="c c1" style="letter-spacing:-0.02px">Bangladesh</span><span class="c c2" style="letter-spacing:-0.67px">BD</span><span class="c c3" style="letter-spacing:-0.03px">Dhaka</span><span class="c c4" style="letter-spacing:-0.02px">Bangladesh</span><span class="c c5 n">144000</span><span class="c c6 n">123062800</span><span class="c c7"></span></div>
<div class="r" style="top:300px"><i class="rs"></i><i class="ex"><b></b></i><span class="c c1" style="letter-spacing:0.06px">Barbados</span><span class="c c2" style="letter-spacing:-1.05px">BDS</span><span class="c c3" style="letter-spacing:0.45px">Bridgetown</span><span class="c c4" style="letter-spacing:0.06px">Barbados</span><span class="c c5 n">430</span><span class="c c6 n">257030</span><span class="c c7"></span></div>
<div class="r alt" style="top:320px"><i class="rs"></i><i class="ex"><b></b></i><span class="c c1" style="letter-spacing:0.15px">Benin</span><span class="c c2" style="letter-spacing:-0.71px">BEN</span><span class="c c3" style="letter-spacing:0.52px">Porto-Novo</span><span class="c c4" style="letter-spacing:0.15px">Benin</span><span class="c c5 n">112620</span><span class="c c6 n">5709529</span><span class="c c7"></span></div>
<div class="r" style="top:340px"><i class="rs"></i><i class="ex"><b></b></i><span class="c c1" style="letter-spacing:0.21px">Bermuda</span><span class="c c2" style="letter-spacing:-0.53px">BERM</span><span class="c c3" style="letter-spacing:0.49px">Hamilton</span><span class="c c4" style="letter-spacing:0.21px">Bermuda</span><span class="c c5 n">53</span><span class="c c6 n">67837</span><span class="c c7"></span></div>
<div class="r alt" style="top:360px"><i class="rs"></i><i class="ex"><b></b></i><span class="c c1" style="letter-spacing:-0.02px">Burkina Faso</span><span class="c c2" style="letter-spacing:-0.93px">BF</span><span class="c c3" style="letter-spacing:0.21px">Ouagadougou</span><span class="c c4" style="letter-spacing:-0.02px">Burkina Faso</span><span class="c c5 n">274200</span><span class="c c6 n">10623323</span><span class="c c7"></span></div>
<div class="r" style="top:380px"><i class="rs"></i><i class="ex"><b></b></i><span class="c c1" style="letter-spacing:0.07px">Bulgaria</span><span class="c c2" style="letter-spacing:-1.04px">BG</span><span class="c c3" style="letter-spacing:0.08px">Sofia</span><span class="c c4" style="letter-spacing:0.07px">Bulgaria</span><span class="c c5 n">110910</span><span class="c c6 n">8612757</span><span class="c c7"></span></div>
<div class="r alt" style="top:400px"><i class="rs"></i><i class="ex"><b></b></i><span class="c c1" style="letter-spacing:0.36px">Bhutan</span><span class="c c2" style="letter-spacing:-0.80px">BHT</span><span class="c c3" style="letter-spacing:0.45px">Thimphu</span><span class="c c4" style="letter-spacing:0.36px">Bhutan</span><span class="c c5 n">47000</span><span class="c c6 n">1822625</span><span class="c c7"></span></div>
<div class="r" style="top:420px"><i class="rs"></i><i class="ex"><b></b></i><span class="c c1" style="letter-spacing:0.43px">Burundi</span><span class="c c2" style="letter-spacing:-0.24px">BI</span><span class="c c3" style="letter-spacing:0.41px">Bujumbura</span><span class="c c4" style="letter-spacing:0.43px">Burundi</span><span class="c c5 n">27830</span><span class="c c6 n">5943057</span><span class="c c7"></span></div>
<div style="left:0;top:440px;width:709px;height:3px;background:#f0f0f0;border-bottom:1px solid #e3dfcf"></div><i style="left:0;top:440px;width:18px;height:3px;background:#e1e3e8;border-right:1px solid #c6c8cf"></i>
<div class="r tot" style="top:442px"><i class="rs"></i><span class="c" style="left:18px;width:112px;text-align:right;padding-right:1px;font-weight:bold;line-height:22px">Total</span><span class="c c2"></span><span class="c c3"></span><span class="c c4"></span><span class="c c5"></span><span class="c c6 n" style="font-weight:bold;line-height:24px">5774449258</span><span class="c c7"></span></div>
</div>
<div style="left:215px;top:645px;width:709px;height:19px;background:linear-gradient(#f5f6f8 0,#f3f4f6 50%,#e8eaee 50%,#e6e8ec 100%);border-top:1px solid #a9adb3"></div>
<div style="left:924px;top:645px;width:18px;height:19px;background:#c3c6cb"></div>
<div style="left:214px;top:663px;width:728px;height:1px;background:#b4b7bd"></div>
<div style="left:294px;top:647px;width:51px;height:15px;background:#fff;border:1px solid #c2c5ca"></div>
<div style="left:488px;top:647px;width:70px;height:15px;background:#fff;border:1px solid #c2c5ca"></div>
<i style="left:401px;top:647px;width:1px;height:15px;background:#c6c9ce"></i>
<i style="left:482px;top:647px;width:1px;height:15px;background:#c6c9ce"></i>
<svg style="left:264px;top:650px" width="140" height="10" viewBox="264 650 140 10"><path d="M266.5 651.5V658.5" stroke="#333" stroke-width="1.2"/><path d="M272.2 651.5V658.5L267.6 655Z" fill="#333"/><path d="M288.4 651.5V658.5L283.8 655Z" fill="#b9b9b9"/><path d="M353.8 651.5V658.5L358.4 655Z" fill="#333"/><path d="M369.6 651.5V658.5L374.2 655Z" fill="#333"/><path d="M375.6 651.5V658.5" stroke="#333" stroke-width="1.2"/><path d="M383.8 651.5V658.5L388.4 655Z" fill="#333"/><path d="M392.6 651.4V658.6M389 655H396.2M390 652.4L395.2 657.6M395.2 652.4L390 657.6" stroke="#f2c230" stroke-width="1.3"/></svg>
<svg style="left:410px;top:647px" width="18" height="15" viewBox="410 647 18 15"><path d="M411 648.4H421V649.6L417.2 653.6V659.6H414.8V653.6L411 649.6Z" fill="#b4b4b4"/><path d="M418 655.4L424.6 661.2M424.6 655.4L418 661.2" stroke="#b4b4b4" stroke-width="1.3"/></svg>
<div id="status"></div><div id="blackbar"></div>
<span class="" style="left:221px;top:648px;font-size:12px;line-height:16px;white-space:nowrap;letter-spacing:-0.574px;color:#444;">Record:</span>
<span class="" style="left:297px;top:648px;font-size:12px;line-height:16px;white-space:nowrap;letter-spacing:-0.421px;color:#222;">1 of 238</span>
<span class="" style="left:430px;top:648px;font-size:12px;line-height:16px;white-space:nowrap;letter-spacing:-0.260px;color:#9a9a9a;">No Filter</span>
<span class="" style="left:490px;top:648px;font-size:12px;line-height:16px;white-space:nowrap;letter-spacing:-0.670px;color:#222;">Search</span>
<span class="" style="left:7px;top:668px;font-size:12px;line-height:16px;white-space:nowrap;letter-spacing:-0.273px;color:#444;">Datasheet View</span>
<div style="left:865px;top:665px;width:38px;height:19px;background:#c6c6c6"></div>
<svg style="left:876px;top:667px" width="16" height="15" viewBox="876 667 16 15"><rect x="877.6" y="668.7" width="12.8" height="11.6" fill="none" stroke="#666" stroke-width="1.2"/><path d="M877.6 671H890.4M881.2 668.7V680.3" stroke="#666" stroke-width="1.1"/><path d="M883 674.6H885.6M886.4 674.6H889.2M883 677.6H885.6M886.4 677.6H889.2" stroke="#666" stroke-width="1.1"/></svg>
<svg style="left:914px;top:667px" width="16" height="15" viewBox="914 667 16 15"><path d="M915.5 668.8V675.3H919.6Z" fill="none" stroke="#666" stroke-width="1"/><path d="M920.2 675.2L920.8 673.4L926 668.4L927.4 669.8L922.2 674.8Z" fill="#666"/><rect x="916.7" y="677.7" width="11.8" height="2.8" fill="none" stroke="#666" stroke-width="1.1"/><path d="M919.5 677.7V679M922.5 677.7V679M925.5 677.7V679" stroke="#666" stroke-width="0.8"/></svg>
<svg style="left:700px;top:590px" width="180" height="90" viewBox="700 590 180 90"><path fill="#fe980c" d="M708.5 632.5C708.5 610.3 740.1 596.7 787.4 596.7C834.7 596.7 866.3 610.3 866.3 632.5C866.3 654.8 834.7 668.4 787.4 668.4C740.1 668.4 708.5 654.8 708.5 632.5Z M719.1 632.0C719.1 650.1 746.4 661.1 787.4 661.1C828.4 661.1 855.7 650.1 855.7 632.0C855.7 614.0 828.4 603.0 787.4 603.0C746.4 603.0 719.1 614.0 719.1 632.0Z"/></svg>
</div></body></html>
